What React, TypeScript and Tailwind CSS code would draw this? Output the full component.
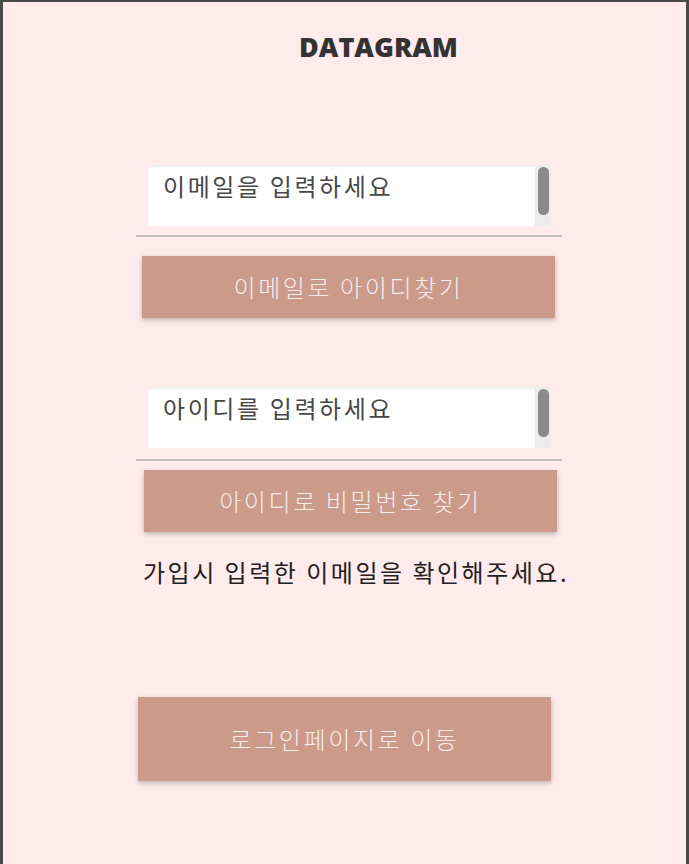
const kr = "font-['Noto_Sans_CJK_KR','Noto_Sans',sans-serif]";

const FakeInput = ({ placeholder }: { placeholder: string }) => (
  <div className="ml-[145px] flex h-[61px] w-[403px] bg-white shadow-[inset_0_2px_3px_rgba(0,0,0,0.08)]">
    <p className={`flex-1 pl-[15px] pt-[3px] text-[24px] leading-[36px] tracking-[2.6px] text-[#474747] ${kr}`}>
      {placeholder}
    </p>
    <div className="flex w-[16px] justify-center bg-[#ececec] pt-[2px]">
      <div className="h-[48px] w-[11px] rounded-full bg-[#8a8a8a]" />
    </div>
  </div>
);

const Btn = ({ label, x, h, mt }: { label: string; x: string; h: string; mt: string }) => (
  <button
    className={`${x} ${h} ${mt} flex w-[413px] items-center justify-center bg-[#cb9a8b] text-[24px] font-light tracking-[2.6px] text-[#f7ecec] shadow-[0_2px_5px_rgba(0,0,0,0.25)] ${kr}`}
  >
    {label}
  </button>
);

export default function App() {
  return (
    <div className="min-h-[864px] border-x-[3px] border-t-[2px] border-[#4a4a4a] bg-[#ffebec]">
      <h1 className="pt-[28px] pl-[296px] text-[27px] leading-[34px] font-extrabold text-[#333] font-['Open_Sans',sans-serif]">
        DATAGRAM
      </h1>

      <div className="mt-[101px]">
        <FakeInput placeholder="이메일을 입력하세요" />
        <div className="mt-[9px] ml-[133px] h-[2px] w-[426px] bg-[#c4bebe]" />
        <Btn label="이메일로 아이디찾기" x="ml-[139px]" h="h-[62px]" mt="mt-[19px]" />
      </div>

      <div className="mt-[69px]">
        <FakeInput placeholder="아이디를 입력하세요" />
        <div className="mt-[11px] ml-[133px] h-[2px] w-[426px] bg-[#c4bebe]" />
        <Btn label="아이디로 비밀번호 찾기" x="ml-[141px]" h="h-[62px]" mt="mt-[9px]" />
      </div>

      <p className={`mt-[22px] ml-[140px] text-[24px] leading-[36px] tracking-[2.5px] text-[#222] ${kr}`}>
        가입시 입력한 이메일을 확인해주세요.
      </p>

      <Btn label="로그인페이지로 이동" x="ml-[135px]" h="h-[84px]" mt="mt-[107px]" />
    </div>
  );
}
